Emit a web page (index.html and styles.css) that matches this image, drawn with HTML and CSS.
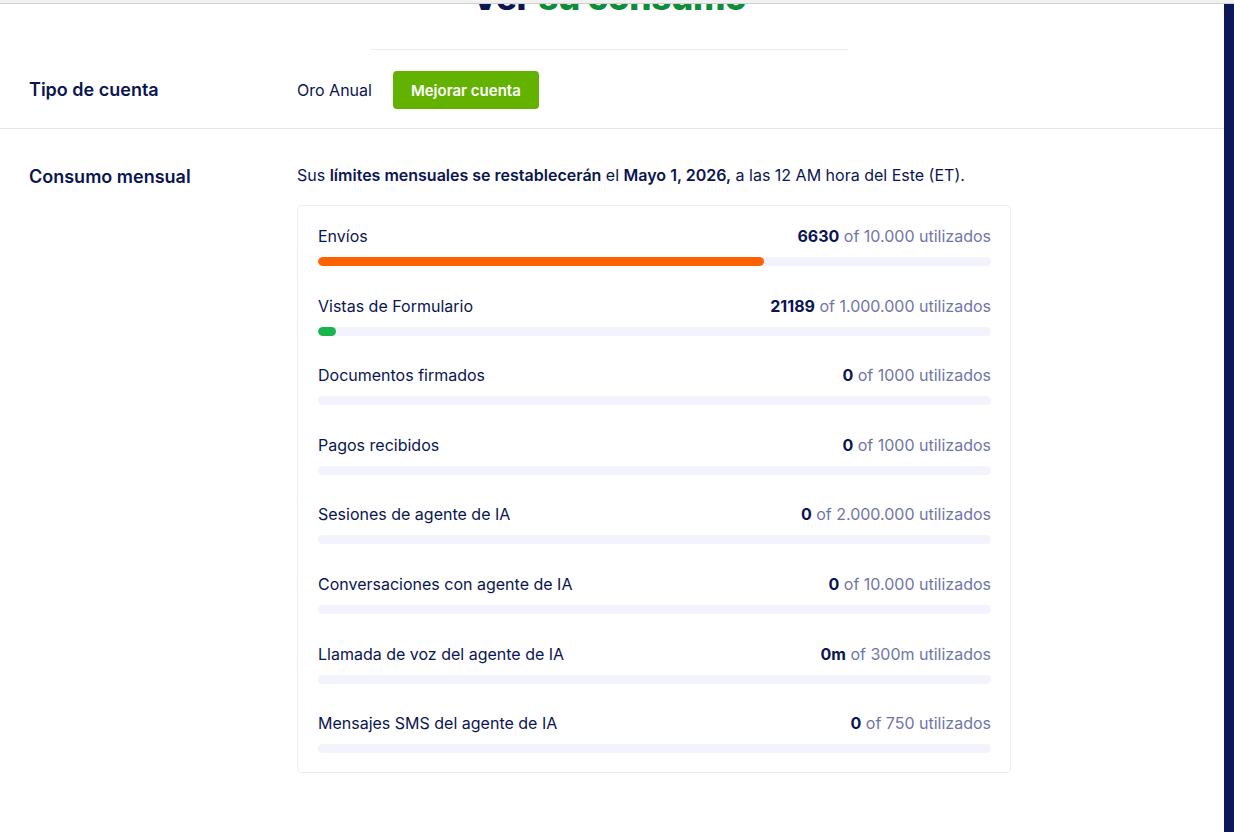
FILE: index.html
```html
<!DOCTYPE html>
<html lang="es">
<head>
    <meta charset="UTF-8">
    <meta name="viewport" content="width=device-width, initial-scale=1.0">
    <title>Ver su consumo</title>
    <link rel="stylesheet" href="styles.css">
</head>
<body>
    <div class="top-strip"></div>
    <div class="page">
        <div class="main">
            <div class="hero">
                <h1 class="hero-title">Ver <span class="accent">su consumo</span></h1>
                <div class="hero-rule"></div>
            </div>

            <div class="row row-account">
                <div class="row-label">Tipo de cuenta</div>
                <div class="row-body account">
                    <span class="plan">Oro Anual</span>
                    <button class="upgrade-btn">Mejorar cuenta</button>
                </div>
            </div>

            <div class="row row-usage">
                <div class="row-label">Consumo mensual</div>
                <div class="row-body">
                    <p class="reset-note">Sus <strong>límites mensuales se restablecerán</strong> el <strong>Mayo 1, 2026,</strong> a las 12 AM hora del Este (ET).</p>

                    <div class="usage-card">
                        <div class="usage-item">
                            <div class="usage-head">
                                <span class="usage-name">Envíos</span>
                                <span class="usage-count"><b>6630</b> of 10.000 utilizados</span>
                            </div>
                            <div class="track"><div class="fill fill-orange" style="width: 66.3%"></div></div>
                        </div>
                        <div class="usage-item">
                            <div class="usage-head">
                                <span class="usage-name">Vistas de Formulario</span>
                                <span class="usage-count"><b>21189</b> of 1.000.000 utilizados</span>
                            </div>
                            <div class="track"><div class="fill fill-green" style="width: 18px"></div></div>
                        </div>
                        <div class="usage-item">
                            <div class="usage-head">
                                <span class="usage-name">Documentos firmados</span>
                                <span class="usage-count"><b>0</b> of 1000 utilizados</span>
                            </div>
                            <div class="track"></div>
                        </div>
                        <div class="usage-item">
                            <div class="usage-head">
                                <span class="usage-name">Pagos recibidos</span>
                                <span class="usage-count"><b>0</b> of 1000 utilizados</span>
                            </div>
                            <div class="track"></div>
                        </div>
                        <div class="usage-item">
                            <div class="usage-head">
                                <span class="usage-name">Sesiones de agente de IA</span>
                                <span class="usage-count"><b>0</b> of 2.000.000 utilizados</span>
                            </div>
                            <div class="track"></div>
                        </div>
                        <div class="usage-item">
                            <div class="usage-head">
                                <span class="usage-name">Conversaciones con agente de IA</span>
                                <span class="usage-count"><b>0</b> of 10.000 utilizados</span>
                            </div>
                            <div class="track"></div>
                        </div>
                        <div class="usage-item">
                            <div class="usage-head">
                                <span class="usage-name">Llamada de voz del agente de IA</span>
                                <span class="usage-count"><b>0m</b> of 300m utilizados</span>
                            </div>
                            <div class="track"></div>
                        </div>
                        <div class="usage-item">
                            <div class="usage-head">
                                <span class="usage-name">Mensajes SMS del agente de IA</span>
                                <span class="usage-count"><b>0</b> of 750 utilizados</span>
                            </div>
                            <div class="track"></div>
                        </div>
                    </div>
                </div>
            </div>
        </div>
        <div class="side-strip"></div>
    </div>
</body>
</html>
```

FILE: styles.css
```css
html, body {
    margin: 0;
    padding: 0;
    height: 100%;
    overflow: hidden;
}
body {
    font-family: Inter, "Noto Sans", sans-serif;
    color: #0a1551;
    background: #fff;
}
.top-strip {
    position: absolute;
    top: 0;
    left: 0;
    right: 0;
    height: 3px;
    background: #f1f1f1;
    border-bottom: 1px solid #cfcfcf;
    z-index: 5;
}
.page {
    display: flex;
    height: 100%;
}
.main {
    flex: 1;
}
.side-strip {
    width: 10px;
    background: #0f1856;
}

/* title, scrolled mostly out of view */
.hero {
    display: flex;
    flex-direction: column;
    align-items: center;
}
.hero-title {
    margin: -24px 6px 0 0;
    font-size: 35px;
    line-height: 42px;
    font-weight: 800;
    letter-spacing: -0.3px;
    color: #0a1551;
}
.hero-title .accent {
    color: #0f8c3a;
}
.hero-rule {
    width: 477px;
    height: 1px;
    margin: 31px 6px 0 0;
    background: #ececec;
}

.row {
    display: flex;
    align-items: flex-start;
}
.row-label {
    width: 268px;
    padding-left: 29px;
    font-size: 18px;
    font-weight: 600;
    line-height: 24px;
}
.row-body {
    flex: 1;
}
.row-account {
    align-items: center;
    padding: 21px 0 19px;
    border-bottom: 1px solid #e3e3e3;
}
.account {
    display: flex;
    align-items: center;
    gap: 21px;
}
.plan {
    font-size: 16px;
}
.upgrade-btn {
    height: 38px;
    padding: 0 18px;
    border: none;
    border-radius: 4px;
    background: #64b200;
    color: #fff;
    font-family: inherit;
    font-size: 15px;
    font-weight: 600;
}

.row-usage {
    padding-top: 36px;
}
.row-usage .row-label {
    margin-top: 0;
}
.reset-note {
    margin: 0 0 20px;
    font-size: 16px;
    line-height: 20px;
}
.reset-note strong {
    font-weight: 600;
}
.usage-card {
    width: 673px;
    padding: 20px 19px 19px 20px;
    border: 1px solid #eeeef3;
    border-radius: 4px;
}
.usage-item + .usage-item {
    margin-top: 29.6px;
}
.usage-head {
    display: flex;
    justify-content: space-between;
    font-size: 16px;
    line-height: 20px;
}
.usage-count {
    color: #6f76a7;
}
.usage-count b {
    font-weight: 700;
    color: #0a1551;
}
.track {
    height: 9px;
    margin-top: 11px;
    border-radius: 5px;
    background: #f3f3fe;
    overflow: hidden;
}
.fill {
    height: 100%;
    border-radius: 5px;
}
.fill-orange {
    background: #ff6100;
}
.fill-green {
    background: #18b44d;
}
```
